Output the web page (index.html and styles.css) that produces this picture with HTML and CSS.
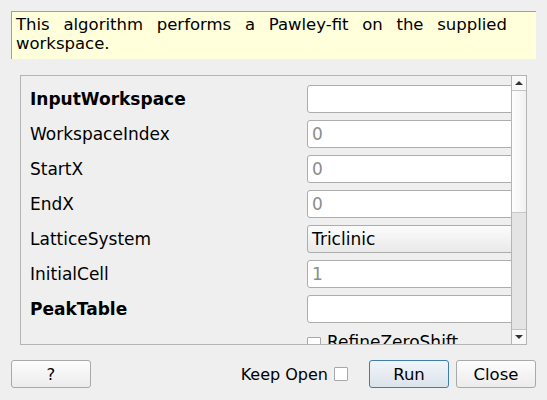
FILE: index.html
```html
<!DOCTYPE html>
<html>
<head>
<meta charset="utf-8">
<link rel="stylesheet" href="styles.css">
</head>
<body>
<div class="dialog">
  <div class="desc">This algorithm performs a Pawley-fit on the supplied workspace.</div>
  <div class="scrollarea">
    <div class="viewport">
      <div class="form">
        <div class="label bold">InputWorkspace</div>
        <div class="field"></div>
        <div class="label">WorkspaceIndex</div>
        <div class="field placeholder">0</div>
        <div class="label">StartX</div>
        <div class="field placeholder">0</div>
        <div class="label">EndX</div>
        <div class="field placeholder">0</div>
        <div class="label">LatticeSystem</div>
        <div class="field combo">Triclinic</div>
        <div class="label">InitialCell</div>
        <div class="field placeholder">1</div>
        <div class="label bold">PeakTable</div>
        <div class="field"></div>
        <div class="label"></div>
        <div class="checkrow"><span class="check"></span><span>RefineZeroShift</span></div>
      </div>
    </div>
    <div class="vscroll">
      <div class="sbtn up"><span class="tri-up"></span></div>
      <div class="handle"></div>
      <div class="track"></div>
      <div class="sbtn down"><span class="tri-down"></span></div>
    </div>
  </div>
  <div class="buttons">
    <button class="btn">?</button>
    <div class="spacer"></div>
    <label class="keep">Keep Open <span class="check keepcheck"></span></label>
    <button class="btn default">Run</button>
    <button class="btn">Close</button>
  </div>
</div>
</body>
</html>
```
FILE: styles.css
```css
html, body {
  margin: 0;
  padding: 0;
  background: #efefef;
}
body {
  font-family: "DejaVu Sans", sans-serif;
  font-size: 16px;
  color: #000;
}
.dialog {
  width: 547px;
  height: 400px;
  box-sizing: border-box;
  padding: 11px 11px 0 11px;
  display: flex;
  flex-direction: column;
}
.desc {
  height: 48px;
  box-sizing: border-box;
  background: #ffffdc;
  border-top: 1px solid #a0a0a0;
  border-left: 1px solid #a0a0a0;
  padding: 3px 29px 0 4px;
  line-height: 19px;
  text-align: justify;
  font-size: 16.5px;
}
.scrollarea {
  margin: 16px 9px 0 9px;
  height: 270px;
  box-sizing: border-box;
  border: 1px solid #b4b4b4;
  display: flex;
  overflow: hidden;
}
.viewport {
  flex: 1;
  overflow: hidden;
  position: relative;
  font-size: 17px;
}
.form {
  display: grid;
  grid-template-columns: 277px 260px;
  grid-auto-rows: 28px;
  row-gap: 7px;
  padding: 9px 0 0 9px;
  align-items: center;
}
.label {
  line-height: 28px;
  white-space: nowrap;
}
.bold {
  font-weight: bold;
}
.field {
  height: 28px;
  box-sizing: border-box;
  border: 1px solid #adadad;
  border-radius: 3px;
  background: #fff;
  padding-left: 4px;
  line-height: 26px;
}
.placeholder {
  color: #8c8c8c;
}
.combo {
  background: linear-gradient(#fcfcfc, #e9e9e9);
  color: #000;
}
.checkrow {
  display: flex;
  align-items: center;
  gap: 6px;
  height: 28px;
  box-sizing: border-box;
  padding-bottom: 5px;
  white-space: nowrap;
}
.check {
  display: inline-block;
  width: 12px;
  height: 12px;
  border: 1px solid #a8a8a8;
  background: #fff;
  border-radius: 1px;
  flex: none;
}
.checkrow .check {
  margin-top: 5px;
}
.vscroll {
  width: 14px;
  border-left: 1px solid #b4b4b4;
  display: flex;
  flex-direction: column;
}
.sbtn {
  height: 14px;
  background: #f8f8f8;
  display: flex;
  align-items: center;
  justify-content: center;
}
.sbtn.up {
  border-bottom: 1px solid #c4c4c4;
}
.sbtn.down {
  border-top: 1px solid #c4c4c4;
}
.tri-up {
  width: 0;
  height: 0;
  border-left: 4px solid transparent;
  border-right: 4px solid transparent;
  border-bottom: 4px solid #333;
}
.tri-down {
  width: 0;
  height: 0;
  border-left: 4px solid transparent;
  border-right: 4px solid transparent;
  border-top: 4px solid #333;
}
.handle {
  height: 121px;
  background: linear-gradient(90deg, #fdfdfd, #f1f1f1);
  border-bottom: 1px solid #c8c8c8;
}
.track {
  flex: 1;
  background: #e4e4e4;
}
.buttons {
  margin-top: 15px;
  display: flex;
  align-items: center;
  height: 28px;
}
.spacer {
  flex: 1;
}
.btn {
  width: 80px;
  height: 28px;
  box-sizing: border-box;
  font-family: "DejaVu Sans", sans-serif;
  font-size: 16.5px;
  color: #000;
  border: 1px solid #a9a9a9;
  border-radius: 3px;
  background: linear-gradient(#fcfcfc, #ececec);
  padding: 0;
}
.btn.default {
  border-color: #3f7cb0;
  background: linear-gradient(#f1f5f9, #dbe3eb);
  margin-right: 7px;
}
.keep {
  display: flex;
  align-items: center;
  gap: 6px;
  margin-right: 21px;
  font-size: 16px;
}
.keepcheck {
  width: 12px;
  height: 12px;
}
```
